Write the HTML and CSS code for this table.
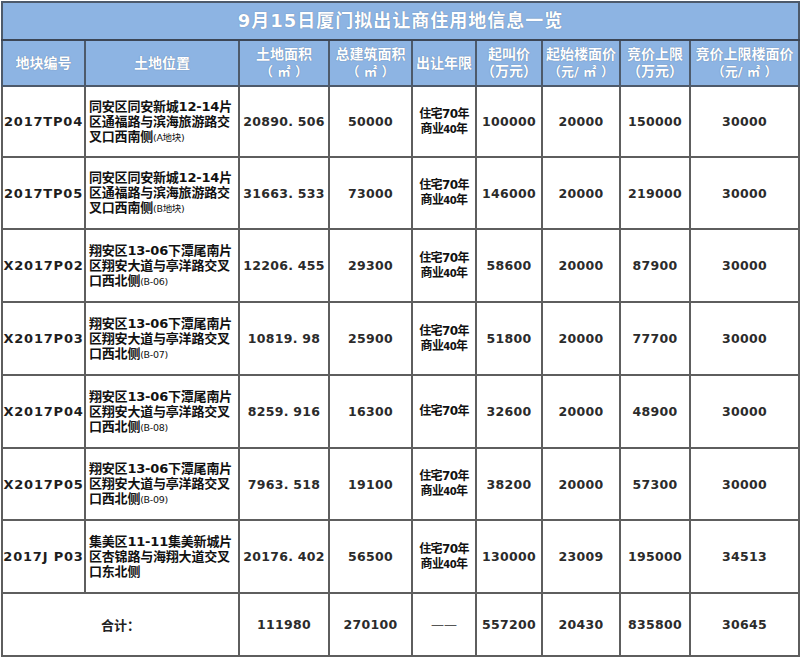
FILE: index.html
```html
<!DOCTYPE html>
<html lang="zh-CN">
<head>
<meta charset="utf-8">
<title>9月15日厦门拟出让商住用地信息一览</title>
<link rel="stylesheet" href="styles.css">
</head>
<body>
<div class="wrap">
<table class="land">
<colgroup>
<col class="c1"><col class="c2"><col class="c3"><col class="c4"><col class="c5"><col class="c6"><col class="c7"><col class="c8"><col class="c9">
</colgroup>
<thead>
<tr class="title-row"><th colspan="9" class="title">9月15日厦门拟出让商住用地信息一览</th></tr>
<tr class="head-row">
<th>地块编号</th>
<th>土地位置</th>
<th>土地面积<br><span class="unit">（ ㎡ ）</span></th>
<th>总建筑面积<br><span class="unit">（ ㎡ ）</span></th>
<th>出让年限</th>
<th>起叫价<br>（万元）</th>
<th>起始楼面价<br><span class="unit">（元/ ㎡ ）</span></th>
<th>竞价上限<br>（万元）</th>
<th>竞价上限楼面价<br><span class="unit">（元/ ㎡ ）</span></th>
</tr>
</thead>
<tbody>
<tr class="r1">
<td class="id">2017TP04</td>
<td class="loc">同安区同安新城12-14片<br>区通福路与滨海旅游路交<br>叉口西南侧<span class="sm">(A地块)</span></td>
<td class="num">20890. 506</td>
<td class="num">50000</td>
<td class="yr">住宅70年<br>商业<span class="yd">40</span>年</td>
<td class="num">100000</td>
<td class="num">20000</td>
<td class="num">150000</td>
<td class="num">30000</td>
</tr>
<tr class="r2">
<td class="id">2017TP05</td>
<td class="loc">同安区同安新城12-14片<br>区通福路与滨海旅游路交<br>叉口西南侧<span class="sm">(B地块)</span></td>
<td class="num">31663. 533</td>
<td class="num">73000</td>
<td class="yr">住宅70年<br>商业<span class="yd">40</span>年</td>
<td class="num">146000</td>
<td class="num">20000</td>
<td class="num">219000</td>
<td class="num">30000</td>
</tr>
<tr class="r3">
<td class="id">X2017P02</td>
<td class="loc">翔安区13-06下潭尾南片<br>区翔安大道与亭洋路交叉<br>口西北侧<span class="sm">(B-06)</span></td>
<td class="num">12206. 455</td>
<td class="num">29300</td>
<td class="yr">住宅70年<br>商业<span class="yd">40</span>年</td>
<td class="num">58600</td>
<td class="num">20000</td>
<td class="num">87900</td>
<td class="num">30000</td>
</tr>
<tr class="r3">
<td class="id">X2017P03</td>
<td class="loc">翔安区13-06下潭尾南片<br>区翔安大道与亭洋路交叉<br>口西北侧<span class="sm">(B-07)</span></td>
<td class="num">10819. 98</td>
<td class="num">25900</td>
<td class="yr">住宅70年<br>商业<span class="yd">40</span>年</td>
<td class="num">51800</td>
<td class="num">20000</td>
<td class="num">77700</td>
<td class="num">30000</td>
</tr>
<tr class="r3">
<td class="id">X2017P04</td>
<td class="loc">翔安区13-06下潭尾南片<br>区翔安大道与亭洋路交叉<br>口西北侧<span class="sm">(B-08)</span></td>
<td class="num">8259. 916</td>
<td class="num">16300</td>
<td class="yr">住宅70年</td>
<td class="num">32600</td>
<td class="num">20000</td>
<td class="num">48900</td>
<td class="num">30000</td>
</tr>
<tr class="r2">
<td class="id">X2017P05</td>
<td class="loc">翔安区13-06下潭尾南片<br>区翔安大道与亭洋路交叉<br>口西北侧<span class="sm">(B-09)</span></td>
<td class="num">7963. 518</td>
<td class="num">19100</td>
<td class="yr">住宅70年<br>商业<span class="yd">40</span>年</td>
<td class="num">38200</td>
<td class="num">20000</td>
<td class="num">57300</td>
<td class="num">30000</td>
</tr>
<tr class="r3">
<td class="id">2017J P03</td>
<td class="loc">集美区11-11集美新城片<br>区杏锦路与海翔大道交叉<br>口东北侧</td>
<td class="num">20176. 402</td>
<td class="num">56500</td>
<td class="yr">住宅70年<br>商业<span class="yd">40</span>年</td>
<td class="num">130000</td>
<td class="num">23009</td>
<td class="num">195000</td>
<td class="num">34513</td>
</tr>
<tr class="total">
<td colspan="2" class="sum">合计：</td>
<td class="num">111980</td>
<td class="num">270100</td>
<td class="dash">——</td>
<td class="num">557200</td>
<td class="num">20430</td>
<td class="num">835800</td>
<td class="num">30645</td>
</tr>
</tbody>
</table>
</div>
</body>
</html>
```
FILE: styles.css
```css
html, body {
  margin: 0;
  padding: 0;
  background: #ffffff;
}
.wrap {
  padding: 1px 0 0 1px;
}
.land {
  width: 797px;
  border-collapse: collapse;
  table-layout: fixed;
  border: 2px solid #3c3c3c;
  font-family: "DejaVu Sans", "Noto Sans CJK SC", sans-serif;
  color: #222222;
}
.c1 { width: 83px; }
.c2 { width: 154px; }
.c3 { width: 90px; }
.c4 { width: 83px; }
.c5 { width: 64px; }
.c6 { width: 66px; }
.c7 { width: 78px; }
.c8 { width: 70px; }
.c9 { width: 109px; }

.land th, .land td {
  border: 2px solid #5e5e5e;
  padding: 0;
  text-align: center;
  vertical-align: middle;
  white-space: nowrap;
  overflow: hidden;
}
.land th {
  background: #8db4e3;
  color: #ffffff;
  font-family: "DejaVu Sans", "Noto Sans CJK SC", sans-serif;
  font-weight: bold;
  font-size: 14px;
  line-height: 17px;
  text-shadow: 0 0 1px rgba(40, 60, 90, 0.55);
  border-color: #4d5a6b;
}
.land th.title {
  height: 36px;
  font-size: 18px;
  line-height: 22px;
  letter-spacing: 1px;
  font-weight: bold;
  border-bottom-color: #3c4656;
}
.head-row th {
  height: 44px;
}
.unit {
  font-size: 13px;
}
.r1 td { height: 69px; }
.r2 td { height: 70px; }
.r3 td { height: 71px; }
.total td { height: 61px; }

.id {
  font-weight: bold;
  font-size: 13px;
  letter-spacing: 0.8px;
  color: #1e1e1e;
}
.loc {
  text-align: left !important;
  padding-left: 3px !important;
  font-family: "DejaVu Sans", "Noto Sans CJK SC", sans-serif;
  font-weight: bold;
  font-size: 13px;
  line-height: 15px;
  color: #111111;
  letter-spacing: -0.2px;
}
.sm {
  font-family: "DejaVu Sans", "Noto Sans CJK SC", sans-serif;
  font-weight: normal;
  font-size: 9.5px;
  letter-spacing: -0.3px;
}
.num {
  font-weight: bold;
  font-size: 12.5px;
  letter-spacing: 0.3px;
  color: #2b2b2b;
}
.yr {
  font-family: "DejaVu Sans", "Noto Sans CJK SC", sans-serif;
  font-weight: bold;
  font-size: 12px;
  line-height: 15px;
  color: #111111;
  letter-spacing: -0.6px;
}
.yd {
  font-size: 10px;
}
.sum {
  font-family: "DejaVu Sans", "Noto Sans CJK SC", sans-serif;
  font-weight: bold;
  font-size: 13px;
  color: #222222;
}
.dash {
  color: #555555;
  font-size: 13px;
}
```
